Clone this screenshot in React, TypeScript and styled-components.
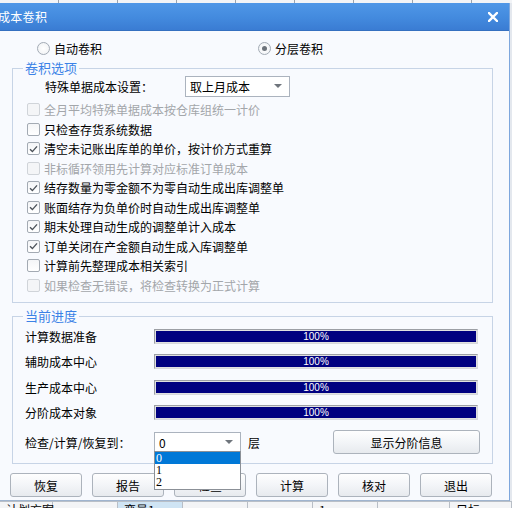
import React from 'react';
import styled, { createGlobalStyle } from 'styled-components';

const GlobalStyle = createGlobalStyle`
  html, body {
    margin: 0;
    padding: 0;
    background: #e9edf2;
  }
  body {
    font-family: "Noto Sans CJK SC", "Liberation Sans", sans-serif;
    font-size: 12px;
    color: #000;
  }
`;

const Page = styled.div`
  width: 512px;
  height: 508px;
  overflow: hidden;
  display: flex;
  flex-direction: column;
  background: #e4e8ee;
`;

const TopStrip = styled.div`
  height: 3px;
  flex: none;
  background: repeating-linear-gradient(
    90deg,
    #f2f4f7 0px,
    #f2f4f7 58px,
    #9aa3ad 58px,
    #9aa3ad 59px
  );
`;

const Dialog = styled.div`
  width: 509px;
  height: 497px;
  flex: none;
  display: flex;
  flex-direction: column;
  background: #f8fafe;
  border-right: 1px solid #7ea7dd;
  border-bottom: 1px solid #9fb4cf;
  position: relative;
`;

const TitleBar = styled.div`
  height: 28px;
  flex: none;
  display: flex;
  align-items: center;
  justify-content: space-between;
  background: linear-gradient(180deg, #4f97e7 0%, #438ade 55%, #3a7cd3 100%);
  border-bottom: 1px solid #3570c0;
  box-sizing: border-box;
  color: #fff;
  font-size: 12px;
`;

const TitleText = styled.span`
  margin-left: -2px;
  letter-spacing: 0.3px;
`;

const CloseButton = styled.span`
  width: 20px;
  height: 20px;
  margin-right: 6px;
  display: flex;
  align-items: center;
  justify-content: center;
`;

const RadioRow = styled.div`
  height: 20px;
  margin-top: 7px;
  display: flex;
  align-items: center;
`;

const RadioItem = styled.label<{ $left: number }>`
  display: flex;
  align-items: center;
  gap: 4px;
  margin-left: ${(p) => p.$left}px;
`;

const RadioCircle = styled.span<{ $checked?: boolean }>`
  width: 11px;
  height: 11px;
  border-radius: 50%;
  border: 1px solid #a3abb5;
  background: radial-gradient(circle, #ffffff 0%, #eef0f3 100%);
  display: flex;
  align-items: center;
  justify-content: center;
  &::after {
    content: '';
    display: ${(p) => (p.$checked ? 'block' : 'none')};
    width: 5px;
    height: 5px;
    border-radius: 50%;
    background: #6c737b;
  }
`;

const Group = styled.fieldset`
  margin: 2px 0 0 12px;
  width: 481px;
  box-sizing: border-box;
  border: 1px solid #c7d4e6;
  padding: 0 12px 7px 12px;
  min-width: 0;
`;

const GroupLegend = styled.legend`
  padding: 0 2px;
  margin-left: -2px;
  height: 16px;
  line-height: 16px;
  font-size: 13px;
  color: #3b82e6;
`;

const SettingRow = styled.div`
  height: 20px;
  display: flex;
  align-items: center;
  padding-left: 20px;
`;

const SettingLabel = styled.span`
  width: 140px;
  font-size: 12px;
`;

const Select = styled.div<{ $width: number }>`
  width: ${(p) => p.$width}px;
  height: 21px;
  box-sizing: border-box;
  border: 1px solid #abb3be;
  background: #fff;
  display: flex;
  align-items: center;
  justify-content: space-between;
  padding: 0 7px 0 4px;
  font-size: 12px;
  flex: none;
`;

const SelectArrow = styled.span`
  width: 0;
  height: 0;
  border-left: 4px solid transparent;
  border-right: 4px solid transparent;
  border-top: 4px solid #6f757c;
`;

const CheckList = styled.div`
  margin-top: 4px;
  display: flex;
  flex-direction: column;
  margin-left: 2px;
`;

const CheckRow = styled.div<{ $disabled?: boolean }>`
  height: 19.5px;
  display: flex;
  align-items: center;
  gap: 4px;
  color: ${(p) => (p.$disabled ? '#a3a6aa' : '#000')};
`;

const CheckBox = styled.span<{ $disabled?: boolean }>`
  width: 13px;
  height: 13px;
  box-sizing: border-box;
  border: 1px solid ${(p) => (p.$disabled ? '#d0d4d9' : '#a3aab3')};
  border-radius: 2px;
  background: ${(p) =>
    p.$disabled ? '#f4f5f7' : 'linear-gradient(180deg, #f4f5f7 0%, #ffffff 100%)'};
  display: flex;
  align-items: center;
  justify-content: center;
  flex: none;
`;

const ProgressRow = styled.div`
  height: 25.3px;
  display: flex;
  align-items: center;
`;

const ProgressLabel = styled.span`
  width: 129px;
  flex: none;
`;

const Bar = styled.div`
  width: 324px;
  height: 15px;
  box-sizing: border-box;
  border: 1px solid #9c9fa5;
  border-right-color: #d6d8dc;
  border-bottom-color: #d6d8dc;
  background: #e0e0e0;
  padding: 1px;
  display: flex;
`;

const BarFill = styled.div`
  height: 100%;
  background: #000080;
  color: #fff;
  font-family: "Liberation Sans", sans-serif;
  font-size: 10px;
  line-height: 11px;
  display: flex;
  align-items: center;
  justify-content: center;
`;

const LevelRow = styled.div`
  height: 28px;
  margin-top: 3px;
  display: flex;
  align-items: center;
  position: relative;
`;

const LevelUnit = styled.span`
  margin-left: 7px;
`;

const Button = styled.button<{ $width: number }>`
  width: ${(p) => p.$width}px;
  height: 24px;
  box-sizing: border-box;
  border: 1px solid #acb3bc;
  border-radius: 3px;
  background: linear-gradient(180deg, #fefefe 0%, #f3f5f8 50%, #e7eaee 100%);
  font-family: "Noto Sans CJK SC", "Liberation Sans", sans-serif;
  font-size: 12px;
  color: #000;
  padding: 0;
  display: flex;
  align-items: center;
  justify-content: center;
  flex: none;
`;

const InfoButton = styled(Button)`
  margin-left: auto;
`;

const DropList = styled.div`
  position: absolute;
  left: 129px;
  top: 23px;
  width: 87px;
  box-sizing: border-box;
  border: 1px solid #8b9097;
  background: #fff;
  z-index: 2;
  padding: 0 0 1px 0;
`;

const DropItem = styled.div<{ $active?: boolean }>`
  height: 12px;
  line-height: 12px;
  padding-left: 1px;
  font-family: "Liberation Serif", serif;
  font-size: 12px;
  background: ${(p) => (p.$active ? '#0078d7' : 'transparent')};
  color: ${(p) => (p.$active ? '#fff' : '#000')};
`;

const ButtonBar = styled.div`
  margin: 9px 0 0 10px;
  display: flex;
  gap: 10px;
`;

const TableStrip = styled.div`
  flex: 1;
  display: flex;
  background: #f3f4f6;
  border-top: 1px solid #b9bfc7;
  overflow: hidden;
`;

const TableCell = styled.div<{ $width: number; $active?: boolean }>`
  width: ${(p) => p.$width}px;
  flex: none;
  box-sizing: border-box;
  border-right: 1px solid #b8bec6;
  background: ${(p) => (p.$active ? '#cfe4f4' : 'transparent')};
  padding: 1px 0 0 6px;
  font-size: 12px;
  line-height: 14px;
  white-space: nowrap;
`;

const checks = [
  { text: '全月平均特殊单据成本按仓库组统一计价', checked: false, disabled: true },
  { text: '只检查存货系统数据', checked: false },
  { text: '清空未记账出库单的单价，按计价方式重算', checked: true },
  { text: '非标循环领用先计算对应标准订单成本', checked: false, disabled: true },
  { text: '结存数量为零金额不为零自动生成出库调整单', checked: true },
  { text: '账面结存为负单价时自动生成出库调整单', checked: true },
  { text: '期末处理自动生成的调整单计入成本', checked: true },
  { text: '订单关闭在产金额自动生成入库调整单', checked: true },
  { text: '计算前先整理成本相关索引', checked: false },
  { text: '如果检查无错误，将检查转换为正式计算', checked: false, disabled: true },
];

const progress = ['计算数据准备', '辅助成本中心', '生产成本中心', '分阶成本对象'];

const actions = ['恢复', '报告', '检查', '计算', '核对', '退出'];

const cells = [
  { w: 53, t: '计划方案' },
  { w: 65, t: '' },
  { w: 65, t: '变量1', active: true },
  { w: 65, t: '' },
  { w: 65, t: '' },
  { w: 65, t: '1' },
  { w: 72, t: '' },
  { w: 62, t: '目标' },
];

const CheckMark = () => (
  <svg width="9" height="8" viewBox="0 0 9 8">
    <path d="M1 4.2 L3.4 6.6 L8 1.4" fill="none" stroke="#4d535a" strokeWidth="1.4" />
  </svg>
);

const CloseIcon = () => (
  <svg width="10" height="10" viewBox="0 0 10 10">
    <path d="M1 1 L9 9 M9 1 L1 9" stroke="#fff" strokeWidth="2.4" strokeLinecap="square" />
  </svg>
);

const App = () => (
  <>
    <GlobalStyle />
    <Page>
      <TopStrip />
      <Dialog>
        <TitleBar>
          <TitleText>成本卷积</TitleText>
          <CloseButton>
            <CloseIcon />
          </CloseButton>
        </TitleBar>

        <RadioRow>
          <RadioItem $left={37}>
            <RadioCircle />
            自动卷积
          </RadioItem>
          <RadioItem $left={156}>
            <RadioCircle $checked />
            分层卷积
          </RadioItem>
        </RadioRow>

        <Group>
          <GroupLegend>卷积选项</GroupLegend>
          <SettingRow>
            <SettingLabel>特殊单据成本设置：</SettingLabel>
            <Select $width={105}>
              取上月成本
              <SelectArrow />
            </Select>
          </SettingRow>
          <CheckList>
            {checks.map((c) => (
              <CheckRow key={c.text} $disabled={c.disabled}>
                <CheckBox $disabled={c.disabled}>{c.checked && <CheckMark />}</CheckBox>
                {c.text}
              </CheckRow>
            ))}
          </CheckList>
        </Group>

        <Group style={{ marginTop: 5 }}>
          <GroupLegend>当前进度</GroupLegend>
          {progress.map((p) => (
            <ProgressRow key={p}>
              <ProgressLabel>{p}</ProgressLabel>
              <Bar>
                <BarFill style={{ width: '100%' }}>100%</BarFill>
              </Bar>
            </ProgressRow>
          ))}
          <LevelRow>
            <ProgressLabel>检查/计算/恢复到：</ProgressLabel>
            <Select $width={87}>
              0
              <SelectArrow />
            </Select>
            <LevelUnit>层</LevelUnit>
            <InfoButton $width={147}>显示分阶信息</InfoButton>
            <DropList>
              <DropItem $active>0</DropItem>
              <DropItem>1</DropItem>
              <DropItem>2</DropItem>
            </DropList>
          </LevelRow>
        </Group>

        <ButtonBar>
          {actions.map((a) => (
            <Button key={a} $width={72}>
              {a}
            </Button>
          ))}
        </ButtonBar>
      </Dialog>
      <TableStrip>
        {cells.map((c, i) => (
          <TableCell key={i} $width={c.w} $active={c.active}>
            {c.t}
          </TableCell>
        ))}
      </TableStrip>
    </Page>
  </>
);

export default App;
